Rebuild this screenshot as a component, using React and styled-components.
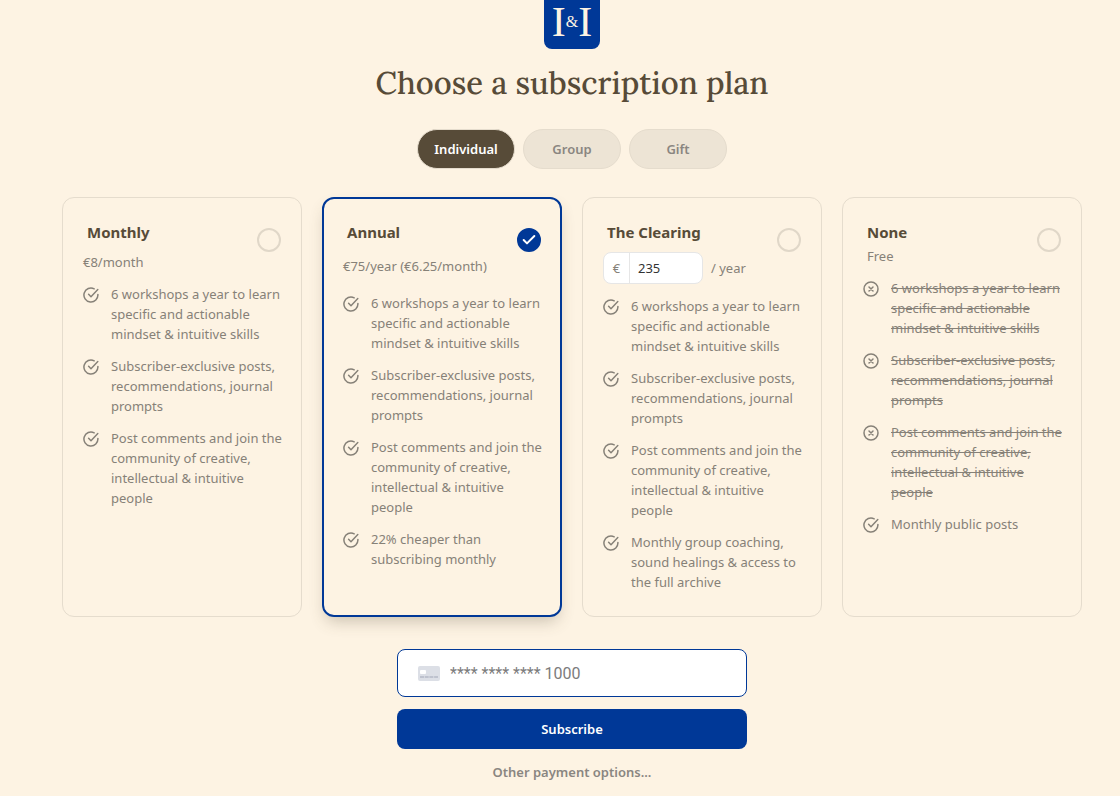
import React, { useState } from 'react';
import styled, { createGlobalStyle, css } from 'styled-components';
import { Check } from 'lucide-react';

const COLORS = {
  BACKGROUND: '#fdf3e3',
  TEXT: '#574b38',
  MUTED: '#868178',
  ACCENT: '#003897',
  BORDER: '#e5dccd',
  RADIO_BORDER: '#e0d7c8',
  PILL: '#ede4d5',
  PILL_TEXT: '#8a8681',
  INPUT_TEXT: '#333333',
  INPUT_BORDER: '#e6e6e6',
  WHITE: '#ffffff',
};

const TABS = ['Individual', 'Group', 'Gift'];

const WORKSHOPS = '6 workshops a year to learn specific and actionable mindset & intuitive skills';
const POSTS = 'Subscriber-exclusive posts, recommendations, journal prompts';
const COMMENTS =
  'Post comments and join the community of creative, intellectual & intuitive people';

const PLANS = [
  {
    id: 'monthly',
    name: 'Monthly',
    price: '€8/month',
    features: [WORKSHOPS, POSTS, COMMENTS],
  },
  {
    id: 'annual',
    name: 'Annual',
    price: '€75/year (€6.25/month)',
    features: [WORKSHOPS, POSTS, COMMENTS, '22% cheaper than subscribing monthly'],
  },
  {
    id: 'clearing',
    name: 'The Clearing',
    editable: true,
    features: [
      WORKSHOPS,
      POSTS,
      COMMENTS,
      'Monthly group coaching, sound healings & access to the full archive',
    ],
  },
  {
    id: 'none',
    name: 'None',
    price: 'Free',
    missing: [WORKSHOPS, POSTS, COMMENTS],
    features: ['Monthly public posts'],
  },
];

const Logo = () => (
  <LogoBox href="#" aria-label="Home">
    <LogoLetter>I</LogoLetter>
    <LogoAmpersand>&amp;</LogoAmpersand>
    <LogoLetter>I</LogoLetter>
  </LogoBox>
);

const FeatureIcon = ({ crossed }) => (
  <IconSvg viewBox="0 0 16 16" aria-hidden="true">
    {crossed ? (
      <>
        <circle cx="8" cy="8" r="7" />
        <path d="M6 6l4 4M10 6l-4 4" />
      </>
    ) : (
      <>
        <path d="M14.9 7.4A7 7 0 1 1 11.2 1.8" />
        <path d="M5.6 7.3L8 9.7L14.8 2.6" />
      </>
    )}
  </IconSvg>
);

const CardIcon = () => (
  <CardSvg viewBox="0 0 22 15" aria-hidden="true">
    <rect width="22" height="15" rx="2" fill="#dcdfe6" />
    <rect x="2" y="4" width="6" height="4" rx="1" fill="#ffffff" />
    <path d="M2 11h18" stroke="#b4b9c6" strokeWidth="1.4" strokeDasharray="4 0.7" />
  </CardSvg>
);

const Plan = ({ plan, selected, onSelect, amount, setAmount }) => (
  <PlanCard $selected={selected}>
    <PlanHeader>
      <div>
        <PlanName htmlFor={plan.id}>{plan.name}</PlanName>
        {plan.editable ? (
          <AmountRow>
            <AmountBox>
              <Currency>€</Currency>
              <AmountInput
                aria-label="Amount per year"
                value={amount}
                onChange={(event) => setAmount(event.target.value.replace(/[^\d]/g, ''))}
              />
            </AmountBox>
            / year
          </AmountRow>
        ) : (
          <Price $plan={plan.id}>{plan.price}</Price>
        )}
      </div>
      <RadioWrapper>
        <Radio
          id={plan.id}
          type="radio"
          name="plan"
          checked={selected}
          onChange={() => onSelect(plan.id)}
        />
        {selected && <Check size={16} strokeWidth={3} aria-hidden="true" />}
      </RadioWrapper>
    </PlanHeader>
    <FeatureList>
      {(plan.missing || []).map((text) => (
        <Feature key={text}>
          <FeatureIcon crossed />
          <FeatureText $crossed>{text}</FeatureText>
        </Feature>
      ))}
      {plan.features.map((text) => (
        <Feature key={text}>
          <FeatureIcon />
          <FeatureText>{text}</FeatureText>
        </Feature>
      ))}
    </FeatureList>
  </PlanCard>
);

const App = () => {
  const [tab, setTab] = useState('Individual');
  const [selectedPlan, setSelectedPlan] = useState('annual');
  const [amount, setAmount] = useState('235');
  const [card, setCard] = useState('');

  return (
    <>
      <GlobalStyle />
      <Page>
        <Logo />
        <Title>Choose a subscription plan</Title>
        <Tabs>
          {TABS.map((name) => (
            <Tab
              key={name}
              type="button"
              $active={name === tab}
              aria-pressed={name === tab}
              onClick={() => setTab(name)}
            >
              {name}
            </Tab>
          ))}
        </Tabs>
        <Plans>
          {PLANS.map((plan) => (
            <Plan
              key={plan.id}
              plan={plan}
              selected={plan.id === selectedPlan}
              onSelect={setSelectedPlan}
              amount={amount}
              setAmount={setAmount}
            />
          ))}
        </Plans>
        <Payment onSubmit={(event) => event.preventDefault()}>
          <CardField>
            <CardIcon />
            <CardInput
              aria-label="Card number"
              placeholder="**** **** **** 1000"
              value={card}
              onChange={(event) => setCard(event.target.value)}
            />
          </CardField>
          <SubscribeButton type="submit">Subscribe</SubscribeButton>
          <OtherOptions type="button">Other payment options...</OtherOptions>
        </Payment>
      </Page>
    </>
  );
};

const SANS = "'Segoe UI', 'Noto Sans', 'Open Sans', sans-serif";

const GlobalStyle = createGlobalStyle`
  *, *::before, *::after {
    box-sizing: border-box;
  }
  body {
    margin: 0;
    background-color: ${COLORS.BACKGROUND};
    color: ${COLORS.MUTED};
    font-family: ${SANS};
    font-size: 13px;
    line-height: 20px;
  }
  button, input {
    font-family: inherit;
  }
`;

const Page = styled.main`
  display: flex;
  flex-direction: column;
  align-items: center;
  padding: 0 38px 12px 62px;
`;

const LogoBox = styled.a`
  display: flex;
  align-items: center;
  justify-content: center;
  width: 56px;
  height: 49px;
  padding-bottom: 6px;
  border-radius: 0 0 8px 8px;
  background-color: ${COLORS.ACCENT};
  color: ${COLORS.BACKGROUND};
  font-family: 'Liberation Serif', serif;
  text-decoration: none;
`;

const LogoLetter = styled.span`
  font-size: 42px;
  line-height: 40px;
`;

const LogoAmpersand = styled.span`
  font-size: 16px;
`;

const Title = styled.h1`
  margin: 14px 0 26px;
  color: ${COLORS.TEXT};
  font-family: Lora, 'Liberation Serif', serif;
  font-size: 31px;
  font-weight: 500;
  line-height: 40px;
  text-align: center;
`;

const Tabs = styled.div`
  display: flex;
  gap: 8px;
`;

const Tab = styled.button`
  width: 98px;
  height: 40px;
  padding: 0;
  border: 1px solid ${COLORS.BORDER};
  border-radius: 20px;
  background-color: ${(props) => (props.$active ? COLORS.TEXT : COLORS.PILL)};
  color: ${(props) => (props.$active ? COLORS.WHITE : COLORS.PILL_TEXT)};
  font-size: 13px;
  font-weight: 600;
  cursor: pointer;
`;

const Plans = styled.div`
  display: grid;
  grid-template-columns: repeat(4, minmax(0, 1fr));
  gap: 20px;
  width: 100%;
  max-width: 1020px;
  margin: 28px 0 32px;
  @media (max-width: 960px) {
    grid-template-columns: repeat(2, minmax(0, 1fr));
  }
`;

const PlanCard = styled.section`
  padding: 22px 16px 24px 20px;
  border: 1px solid ${COLORS.BORDER};
  border-radius: 12px;
  ${(props) =>
    props.$selected &&
    css`
      padding: 21px 15px 23px 19px;
      border: 2px solid ${COLORS.ACCENT};
      box-shadow: 0 8px 16px -4px rgba(87, 75, 56, 0.3);
    `}
`;

const PlanHeader = styled.div`
  display: flex;
  align-items: flex-start;
  justify-content: space-between;
  padding-right: 4px;
`;

const PlanName = styled.label`
  display: block;
  padding: 0 0 2px 4px;
  color: ${COLORS.TEXT};
  font-size: 15px;
  font-weight: 700;
  line-height: 24px;
`;

const PRICE_PADDING = {
  monthly: '6px 0 12px',
  annual: '10px 0 17px',
  none: '0 0 12px 4px',
};

const Price = styled.div`
  padding: ${(props) => PRICE_PADDING[props.$plan]};
`;

const AmountRow = styled.div`
  display: flex;
  align-items: center;
  gap: 8px;
  padding: 6px 0 12px;
`;

const AmountBox = styled.div`
  display: flex;
  width: 100px;
  height: 32px;
  overflow: hidden;
  border: 1px solid ${COLORS.INPUT_BORDER};
  border-radius: 8px;
  background-color: ${COLORS.WHITE};
`;

const Currency = styled.span`
  flex: none;
  width: 26px;
  border-right: 1px solid ${COLORS.INPUT_BORDER};
  line-height: 30px;
  text-align: center;
`;

const AmountInput = styled.input`
  min-width: 0;
  width: 100%;
  padding: 0 8px;
  border: 0;
  outline: 0;
  background: none;
  color: ${COLORS.INPUT_TEXT};
  font-size: 13px;
`;

const RadioWrapper = styled.div`
  display: grid;
  place-items: center;
  flex: none;
  margin-top: 8px;
  color: ${COLORS.WHITE};
  > * {
    grid-area: 1 / 1;
  }
  svg {
    pointer-events: none;
  }
`;

const Radio = styled.input`
  appearance: none;
  width: 24px;
  height: 24px;
  margin: 0;
  border: 2px solid ${COLORS.RADIO_BORDER};
  border-radius: 50%;
  cursor: pointer;
  &:checked {
    border-color: ${COLORS.ACCENT};
    background-color: ${COLORS.ACCENT};
  }
`;

const FeatureList = styled.ul`
  display: flex;
  flex-direction: column;
  gap: 12px;
  margin: 0;
  padding: 0;
  list-style: none;
`;

const Feature = styled.li`
  display: flex;
  align-items: flex-start;
  gap: 12px;
`;

const IconSvg = styled.svg`
  flex: none;
  width: 16px;
  height: 16px;
  margin-top: 3px;
  fill: none;
  stroke: ${COLORS.MUTED};
  stroke-width: 1.5;
  stroke-linecap: round;
  stroke-linejoin: round;
`;

const FeatureText = styled.span`
  text-decoration: ${(props) => (props.$crossed ? 'line-through' : 'none')};
`;

const Payment = styled.form`
  display: flex;
  flex-direction: column;
  gap: 12px;
  width: 100%;
  max-width: 350px;
`;

const CardField = styled.div`
  display: flex;
  align-items: center;
  gap: 10px;
  height: 48px;
  padding: 0 20px;
  border: 1px solid ${COLORS.ACCENT};
  border-radius: 8px;
  background-color: ${COLORS.WHITE};
`;

const CardSvg = styled.svg`
  flex: none;
  width: 22px;
  height: 15px;
`;

const CardInput = styled.input`
  flex: 1;
  min-width: 0;
  padding: 0;
  border: 0;
  outline: 0;
  background: none;
  color: ${COLORS.INPUT_TEXT};
  font-family: 'Segoe UI', Roboto, sans-serif;
  font-size: 16px;
  &::placeholder {
    color: #7c7c7c;
    opacity: 1;
  }
`;

const SubscribeButton = styled.button`
  height: 40px;
  border: 0;
  border-radius: 8px;
  background-color: ${COLORS.ACCENT};
  color: ${COLORS.WHITE};
  font-size: 13px;
  font-weight: 600;
  cursor: pointer;
`;

const OtherOptions = styled.button`
  align-self: center;
  padding: 0;
  border: 0;
  background: none;
  color: ${COLORS.PILL_TEXT};
  font-size: 13px;
  font-weight: 600;
  line-height: 22px;
  cursor: pointer;
`;

export default App;
